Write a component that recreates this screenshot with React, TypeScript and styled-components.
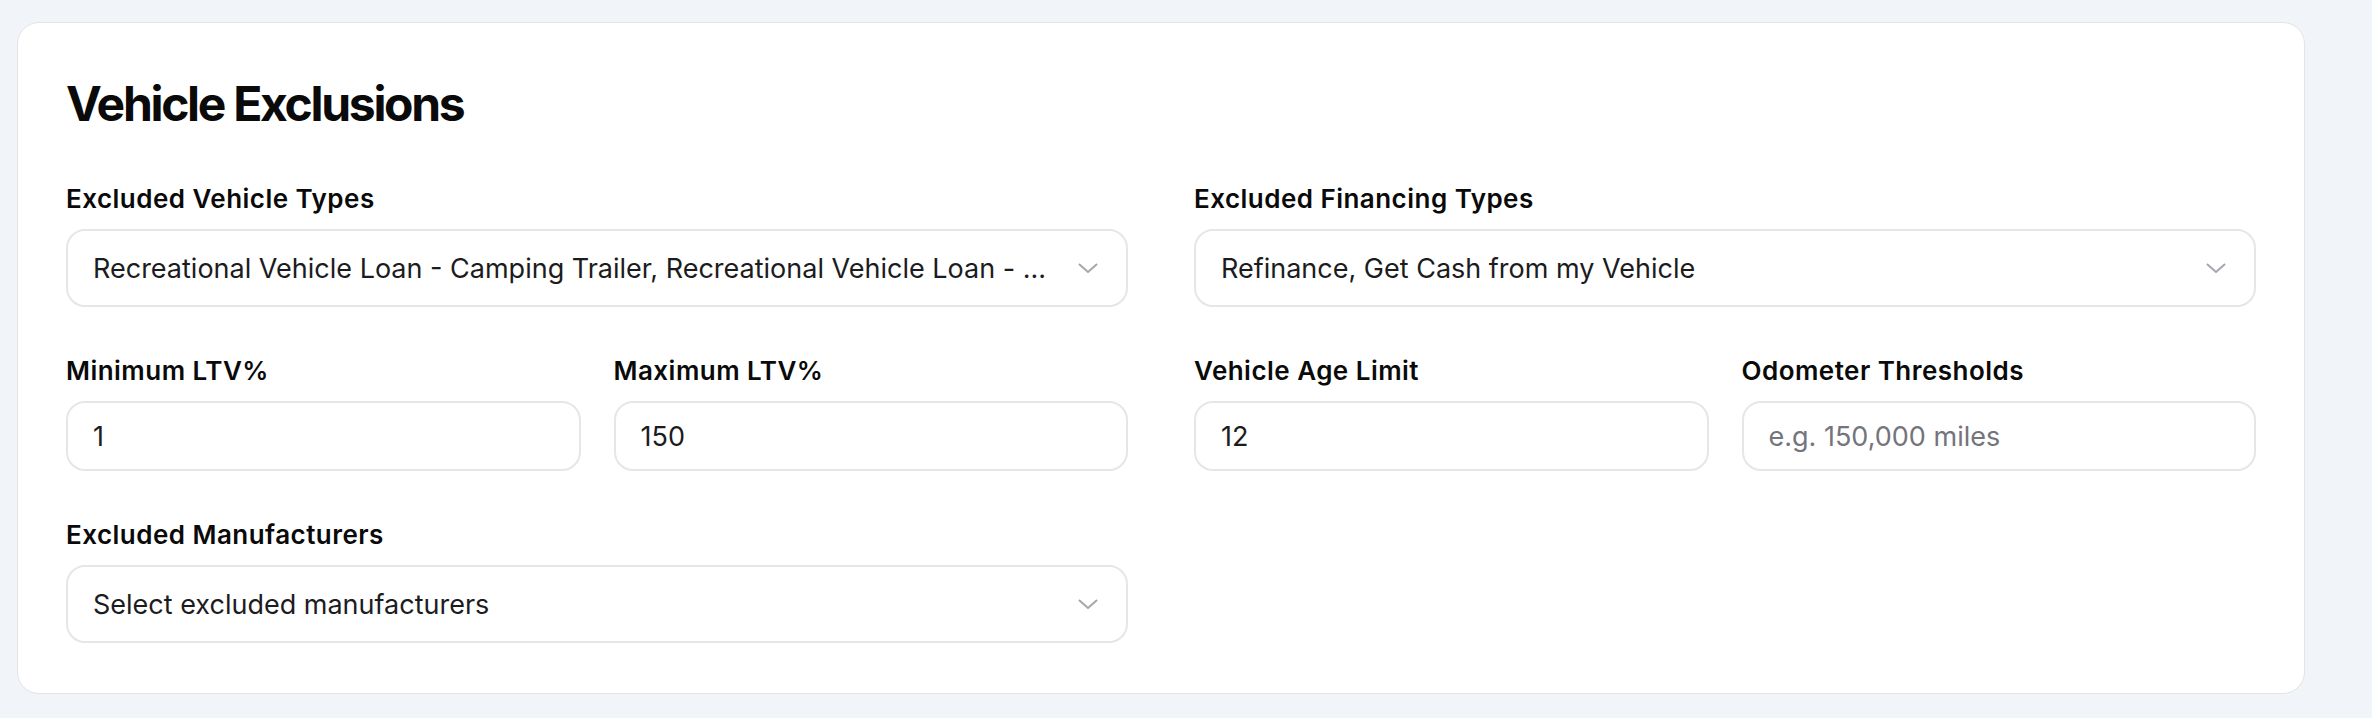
import styled, { createGlobalStyle } from 'styled-components';

const GlobalStyle = createGlobalStyle`
   * {
      box-sizing: border-box;
   }

   body {
      margin: 0;
      background: #f1f4f9;
      font-family: Inter, 'Liberation Sans', sans-serif;
      color: #0a0a0a;
   }
`;

const Page = styled.main`
   padding: 22px 0 26px 17px;
`;

const Card = styled.section`
   width: 2288px;
   background: #ffffff;
   border: 1px solid #e4e4e7;
   border-radius: 22px;
   padding: 52px 48px 50px;
`;

const Title = styled.h2`
   margin: 0 0 50px;
   font-size: 48px;
   line-height: 58px;
   font-weight: 700;
   letter-spacing: -0.048em;
   color: #0a0a0a;
`;

const Grid = styled.div`
   display: grid;
   grid-template-columns: 1fr 1fr;
   column-gap: 66px;
   row-gap: 48px;
`;

const Pair = styled.div`
   display: grid;
   grid-template-columns: 1fr 1fr;
   column-gap: 33px;
`;

const Field = styled.div`
   display: flex;
   flex-direction: column;
   min-width: 0;
`;

const Label = styled.label`
   font-size: 26px;
   line-height: 32px;
   font-weight: 600;
   letter-spacing: 0.018em;
   color: #0a0a0a;
   margin-bottom: 14px;
`;

const Control = styled.div<{ $tall?: boolean }>`
   display: flex;
   align-items: center;
   height: ${(p) => (p.$tall ? '78px' : '70px')};
   padding: 0 27px 0 25px;
   background: #ffffff;
   border: 2px solid #e6e6e9;
   border-radius: 19px;
   font-size: 27px;
   color: #1c1c1e;
`;

const Value = styled.span<{ $muted?: boolean }>`
   flex: 1;
   min-width: 0;
   white-space: nowrap;
   overflow: hidden;
   text-overflow: ellipsis;
   letter-spacing: 0;
   color: ${(p) => (p.$muted ? '#74747c' : '#1c1c1e')};
`;

const Chevron = () => (
   <svg width="22" height="14" viewBox="0 0 22 14" fill="none">
      <path
         d="M2.5 3.5 L11 11 L19.5 3.5"
         stroke="#a6a6ad"
         strokeWidth="2"
         strokeLinecap="round"
         strokeLinejoin="round"
      />
   </svg>
);

function SelectField({ label, value }: { label: string; value: string }) {
   return (
      <Field>
         <Label>{label}</Label>
         <Control $tall>
            <Value>{value}</Value>
            <Chevron />
         </Control>
      </Field>
   );
}

function InputField({
   label,
   value,
   placeholder,
}: {
   label: string;
   value?: string;
   placeholder?: string;
}) {
   return (
      <Field>
         <Label>{label}</Label>
         <Control>
            <Value $muted={!value}>{value || placeholder}</Value>
         </Control>
      </Field>
   );
}

export default function App() {
   return (
      <>
         <GlobalStyle />
         <Page>
            <Card>
               <Title>Vehicle Exclusions</Title>
               <Grid>
                  <SelectField
                     label="Excluded Vehicle Types"
                     value="Recreational Vehicle Loan - Camping Trailer, Recreational Vehicle Loan - ..."
                  />
                  <SelectField
                     label="Excluded Financing Types"
                     value="Refinance, Get Cash from my Vehicle"
                  />
                  <Pair>
                     <InputField label="Minimum LTV%" value="1" />
                     <InputField label="Maximum LTV%" value="150" />
                  </Pair>
                  <Pair>
                     <InputField label="Vehicle Age Limit" value="12" />
                     <InputField
                        label="Odometer Thresholds"
                        placeholder="e.g. 150,000 miles"
                     />
                  </Pair>
                  <SelectField
                     label="Excluded Manufacturers"
                     value="Select excluded manufacturers"
                  />
               </Grid>
            </Card>
         </Page>
      </>
   );
}
